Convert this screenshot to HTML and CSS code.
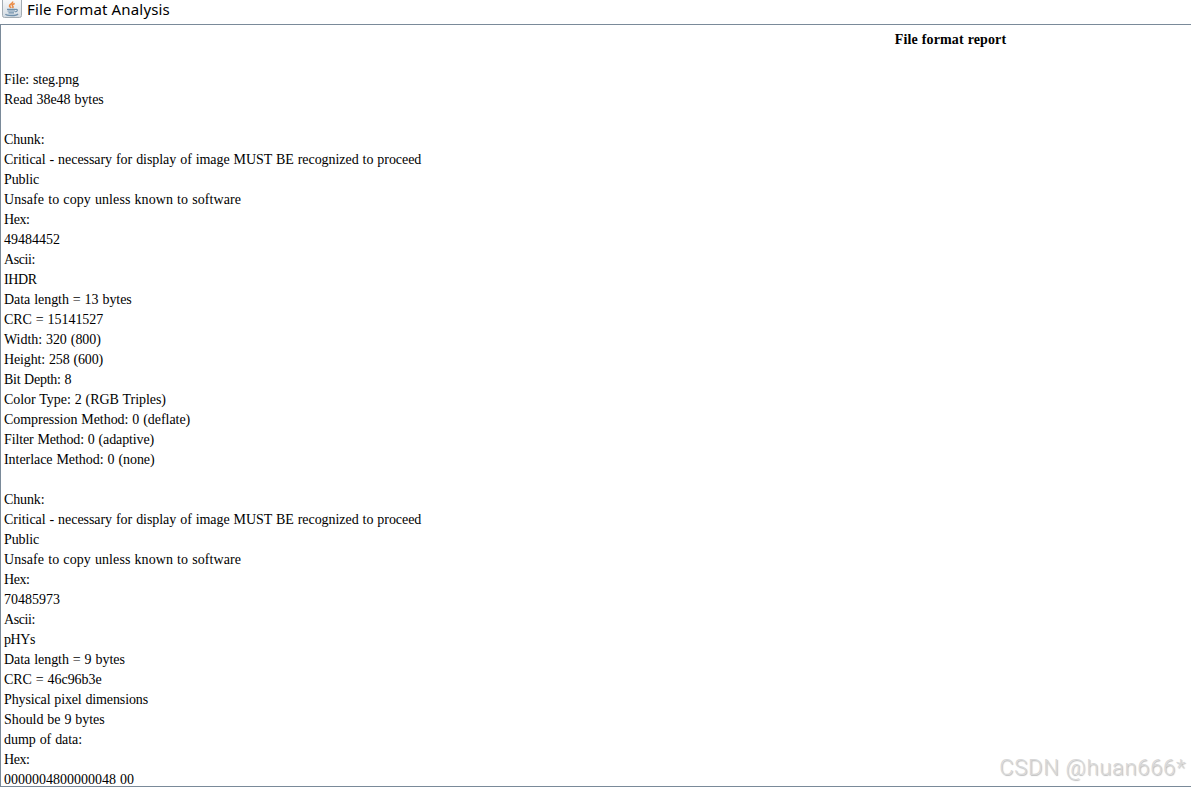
FILE: index.html
```
<!DOCTYPE html>
<html lang="en">
<head>
    <meta charset="UTF-8">
    <meta name="viewport" content="width=device-width, initial-scale=1.0">
    <title>File Format Analysis</title>
    <link rel="stylesheet" href="styles.css">
</head>
<body>

<div class="window">
    <div class="titlebar">
        <svg class="java-icon" width="20" height="18" viewBox="0 0 20 18">
            <defs>
                <linearGradient id="tile" x1="0" y1="0" x2="0" y2="1">
                    <stop offset="0" stop-color="#fdfdfd"/>
                    <stop offset="1" stop-color="#d3dbe2"/>
                </linearGradient>
            </defs>
            <rect x="0.5" y="-3.5" width="19" height="21" rx="2" fill="url(#tile)" stroke="#a3acb3"/>
            <path d="M10.5 1.5c1.2 2.2-3.5 2.6-3 4.6.2 1 1.2 1.1 1.5 1.9M12.7 3.6c-2 .8-3 1.6-2 2.7.7.7.3 1.2-.3 1.7" fill="none" stroke="#ea8a44" stroke-width="1.6"/>
            <path d="M5 9.3h8.5M5.5 11h7.5M6.5 12.8h5.5M13.5 9.5c2.6-.7 2.5 1.8-.4 2.4" fill="none" stroke="#6f90ab" stroke-width="1.2"/>
            <path d="M3.5 14c.8 2 11 2 12.5 0" fill="none" stroke="#6f90ab" stroke-width="1.3"/>
        </svg>
        <span class="title">File Format Analysis</span>
    </div>

    <div class="report">
        <h1>File format report</h1>
        <p class="tight">File: steg.png</p>
        <p>Read 38e48 bytes</p>
        <br>
        <!-- IHDR -->
        <p class="tight">Chunk:</p>
        <p>Critical - necessary for display of image MUST BE recognized to proceed</p>
        <p class="tight">Public</p>
        <p class="loose">Unsafe to copy unless known to software</p>
        <p class="label">Hex:</p>
        <p class="num">49484452</p>
        <p class="label">Ascii:</p>
        <p class="label">IHDR</p>
        <p>Data length = 13 bytes</p>
        <p>CRC = 15141527</p>
        <p>Width: 320 (800)</p>
        <p class="tight">Height: 258 (600)</p>
        <p class="depth">Bit Depth: 8</p>
        <p>Color Type: 2 (RGB Triples)</p>
        <p>Compression Method: 0 (deflate)</p>
        <p class="tight">Filter Method: 0 (adaptive)</p>
        <p>Interlace Method: 0 (none)</p>
        <br>
        <!-- pHYs -->
        <p class="tight">Chunk:</p>
        <p>Critical - necessary for display of image MUST BE recognized to proceed</p>
        <p class="tight">Public</p>
        <p class="loose">Unsafe to copy unless known to software</p>
        <p class="label">Hex:</p>
        <p class="num">70485973</p>
        <p class="label">Ascii:</p>
        <p class="label">pHYs</p>
        <p>Data length = 9 bytes</p>
        <p>CRC = 46c96b3e</p>
        <p class="tight">Physical pixel dimensions</p>
        <p>Should be 9 bytes</p>
        <p>dump of data:</p>
        <p class="label">Hex:</p>
        <p class="num">0000004800000048 00</p>
    </div>

    <div class="watermark">CSDN @huan666*</div>
</div>

</body>
</html>
```
FILE: styles.css
```
body {
    margin: 0;
    background: #fff;
    overflow: hidden;
}
.window {
    position: relative;
    display: flex;
    flex-direction: column;
    height: 787px;
    overflow: hidden;
}
.titlebar {
    display: flex;
    align-items: flex-start;
    gap: 5px;
    height: 24px;
    padding-left: 2px;
}
.java-icon {
    flex: none;
}
.title {
    font-family: "Noto Sans", "Open Sans", sans-serif;
    font-size: 15px;
    line-height: 18px;
    letter-spacing: 0.16px;
    color: #000;
}
.report {
    box-sizing: border-box;
    width: 1901px;
    height: 763px;
    padding: 5px 3px 0;
    border: 1px solid #7a8a99;
    overflow: hidden;
    font-family: "Liberation Serif", "Times New Roman", serif;
    font-size: 14px;
    line-height: 20px;
    letter-spacing: -0.05px;
    word-spacing: 0.5px;
    color: #000;
}
.report h1 {
    margin: 0 0 20px;
    font-size: 14px;
    letter-spacing: 0.1px;
    text-align: center;
}
.report p {
    margin: 0;
    white-space: nowrap;
}
.report .tight {
    letter-spacing: -0.13px;
}
.report .depth {
    letter-spacing: -0.25px;
}
.report .label {
    letter-spacing: -0.4px;
}
.report .loose {
    letter-spacing: 0.08px;
}
.report .num {
    letter-spacing: 0;
}
.watermark {
    position: absolute;
    right: 5px;
    bottom: 5px;
    font-family: Roboto, "Liberation Sans", sans-serif;
    font-size: 22px;
    font-weight: 300;
    line-height: 28px;
    letter-spacing: 0.7px;
    color: #d8d8d8;
    text-shadow: 1px 1px 1px #bcbcbc;
}
```
